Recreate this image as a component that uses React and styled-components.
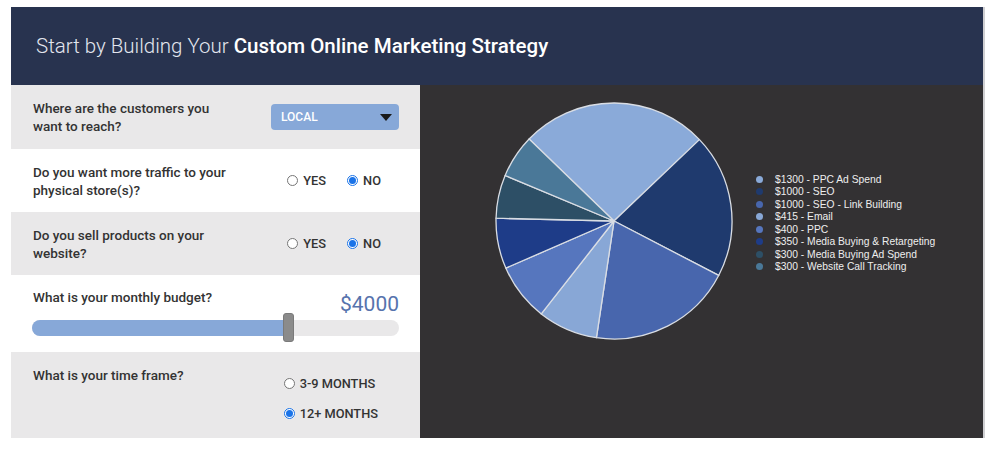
import React, { useState } from 'react'
import styled, { createGlobalStyle } from 'styled-components'

const GlobalStyle = createGlobalStyle`
    html, body {
        margin:0;
        padding:0;
        background:#fff;
    }
    body {
        font-family: Roboto, "Liberation Sans", Arial, sans-serif;
    }
`

const Page = styled.div`
    width:1000px;
    height:452px;
    padding:7px 0 0 11px;
    box-sizing:border-box;
    overflow:hidden;
`

const Frame = styled.div`
    width:974px;
    border-right:2px solid #cfcfd2;
    box-sizing:border-box;
`

const Header = styled.div`
    height:78px;
    width:972px;
    background:#28334f;
    display:flex;
    align-items:center;
    padding-left:25px;
    box-sizing:border-box;
`

const Title = styled.h1`
    margin:0;
    font-size:20.5px;
    font-weight:300;
    color:#e3e6ee;
    letter-spacing:0;
    b {
        font-weight:500;
        color:#fff;
    }
`

const Body = styled.div`
    display:grid;
    grid-template-columns:409px 563px;
    height:353px;
`

const Form = styled.div`
    display:flex;
    flex-direction:column;
`

const Row = styled.div`
    height:${p => p.h}px;
    background:${p => p.shade ? '#e9e8e9' : '#fff'};
    display:flex;
    align-items:${p => p.top ? 'flex-start' : 'center'};
    justify-content:space-between;
    padding:${p => p.top ? '14px' : '0'} 21px 0 22px;
    box-sizing:border-box;
`

const Question = styled.div`
    font-size:13.5px;
    font-weight:500;
    color:#333;
    line-height:18px;
    width:200px;
`

const Select = styled.div`
    width:128px;
    height:26px;
    border-radius:4px;
    background:#87a8d8;
    display:flex;
    align-items:center;
    justify-content:space-between;
    padding:0 7px 0 10px;
    box-sizing:border-box;
    color:#fff;
    font-size:12px;
    font-weight:500;
`

const Caret = styled.span`
    width:0;
    height:0;
    border-left:6px solid transparent;
    border-right:6px solid transparent;
    border-top:7px solid #1a1a1a;
`

const RadioGroup = styled.div`
    display:flex;
    flex-direction:${p => p.column ? 'column' : 'row'};
    gap:${p => p.column ? '12px' : '21px'};
    margin-right:${p => p.mr || 0}px;
    margin-top:${p => p.mt || 0}px;
`

const RadioLabel = styled.label`
    display:flex;
    align-items:center;
    gap:5px;
    font-size:12.8px;
    font-weight:500;
    color:#333;
    height:18px;
`

const Dot = styled.span`
    width:11px;
    height:11px;
    border-radius:50%;
    box-sizing:border-box;
    border:1px solid ${p => p.on ? '#1a73e8' : '#767676'};
    background:#fff;
    display:flex;
    align-items:center;
    justify-content:center;
    &::after {
        content:'';
        width:7px;
        height:7px;
        border-radius:50%;
        background:${p => p.on ? '#1a73e8' : 'transparent'};
    }
`

const BudgetRow = styled.div`
    height:77px;
    background:#fff;
    padding:13px 21px 0 21px;
    box-sizing:border-box;
`

const BudgetHead = styled.div`
    display:flex;
    justify-content:space-between;
    align-items:flex-start;
    padding-left:1px;
`

const Amount = styled.div`
    font-size:21px;
    color:#5673ad;
    margin-top:4px;
`

const Track = styled.div`
    position:relative;
    margin-top:4px;
    height:16px;
    border-radius:8px;
    background:#e9e8e9;
`

const Fill = styled.div`
    height:100%;
    border-radius:8px 0 0 8px;
    background:#87a8d8;
`

const Thumb = styled.div`
    position:absolute;
    top:-7px;
    width:11px;
    height:29px;
    border-radius:3px;
    background:#8b8b8b;
    border:1px solid #7a7a7a;
    box-sizing:border-box;
`

const ChartPanel = styled.div`
    background:#333133;
    display:flex;
    align-items:flex-start;
    padding:16px 0 0 74px;
    box-sizing:border-box;
`

const Legend = styled.ul`
    list-style:none;
    margin:72px 0 0 22px;
    padding:0;
    font-family:"Liberation Sans", Arial, sans-serif;
    font-size:10.3px;
    color:#eeeeee;
`

const LegendItem = styled.li`
    display:flex;
    align-items:center;
    height:12.5px;
    gap:12px;
`

const Bullet = styled.span`
    width:7px;
    height:7px;
    border-radius:50%;
    background:${p => p.color};
`

const slices = [
    { value: 1300, label: '$1300 - PPC Ad Spend', color: '#8aaad9' },
    { value: 1000, label: '$1000 - SEO', color: '#1f3a6e' },
    { value: 1000, label: '$1000 - SEO - Link Building', color: '#4866ad' },
    { value: 415, label: '$415 - Email', color: '#88a7d6' },
    { value: 400, label: '$400 - PPC', color: '#5676be' },
    { value: 350, label: '$350 - Media Buying & Retargeting', color: '#1e3c88' },
    { value: 300, label: '$300 - Media Buying Ad Spend', color: '#2d4f66' },
    { value: 300, label: '$300 - Website Call Tracking', color: '#4a7898' },
]

const Pie = () => {
    const total = slices.reduce((s, x) => s + x.value, 0)
    const cx = 120, cy = 120, r = 118
    let a = -46
    const pt = deg => {
        const rad = deg * Math.PI / 180
        return [cx + r * Math.sin(rad), cy - r * Math.cos(rad)]
    }
    return (
        <svg width="240" height="240" viewBox="0 0 240 240">
            {slices.map(s => {
                const sweep = s.value / total * 360
                const [x1, y1] = pt(a)
                const [x2, y2] = pt(a + sweep)
                a += sweep
                const large = sweep > 180 ? 1 : 0
                return (
                    <path key={s.label}
                        d={`M${cx} ${cy} L${x1} ${y1} A${r} ${r} 0 ${large} 1 ${x2} ${y2} Z`}
                        fill={s.color} stroke="#d9dde4" strokeWidth="1.3" strokeLinejoin="round" />
                )
            })}
        </svg>
    )
}

const Radio = ({ on, children, onClick }) => (
    <RadioLabel onClick={onClick}><Dot on={on} />{children}</RadioLabel>
)

export default function App() {
    const [traffic, setTraffic] = useState('no')
    const [sell, setSell] = useState('no')
    const [time, setTime] = useState('12')
    const pct = 254 / 366 * 100

    return (
        <Page>
            <GlobalStyle />
            <Frame>
                <Header>
                    <Title>Start by Building Your <b>Custom Online Marketing Strategy</b></Title>
                </Header>
                <Body>
                    <Form>
                        <Row h={64} shade>
                            <Question>Where are the customers you want to reach?</Question>
                            <Select>LOCAL<Caret /></Select>
                        </Row>
                        <Row h={63}>
                            <Question>Do you want more traffic to your physical store(s)?</Question>
                            <RadioGroup mr={18}>
                                <Radio on={traffic === 'yes'} onClick={() => setTraffic('yes')}>YES</Radio>
                                <Radio on={traffic === 'no'} onClick={() => setTraffic('no')}>NO</Radio>
                            </RadioGroup>
                        </Row>
                        <Row h={63} shade>
                            <Question>Do you sell products on your website?</Question>
                            <RadioGroup mr={18}>
                                <Radio on={sell === 'yes'} onClick={() => setSell('yes')}>YES</Radio>
                                <Radio on={sell === 'no'} onClick={() => setSell('no')}>NO</Radio>
                            </RadioGroup>
                        </Row>
                        <BudgetRow>
                            <BudgetHead>
                                <Question>What is your monthly budget?</Question>
                                <Amount>$4000</Amount>
                            </BudgetHead>
                            <Track>
                                <Fill style={{ width: `${pct}%` }} />
                                <Thumb style={{ left: `calc(${pct}% - 4px)` }} />
                            </Track>
                        </BudgetRow>
                        <Row h={86} shade top>
                            <Question>What is your time frame?</Question>
                            <RadioGroup column mr={21} mt={-4}>
                                <span />
                                <Radio on={time === '3'} onClick={() => setTime('3')}>3-9 MONTHS</Radio>
                                <Radio on={time === '12'} onClick={() => setTime('12')}>12+ MONTHS</Radio>
                            </RadioGroup>
                        </Row>
                    </Form>
                    <ChartPanel>
                        <Pie />
                        <Legend>
                            {slices.map(s => (
                                <LegendItem key={s.label}><Bullet color={s.color} />{s.label}</LegendItem>
                            ))}
                        </Legend>
                    </ChartPanel>
                </Body>
            </Frame>
        </Page>
    )
}
